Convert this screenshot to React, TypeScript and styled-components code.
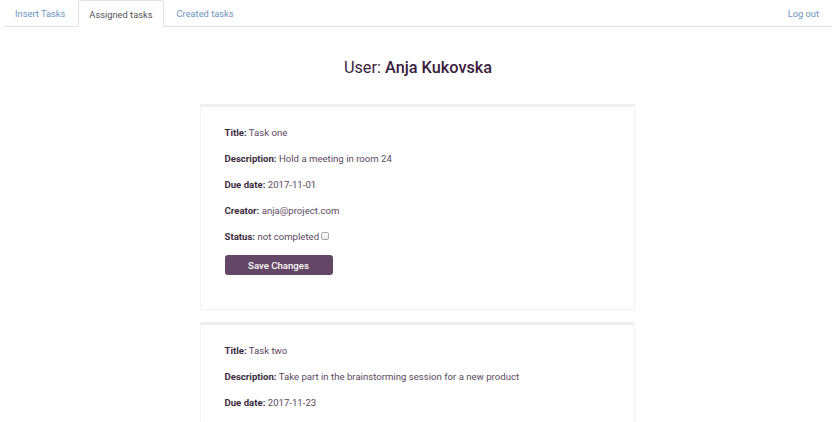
import React from "react";
import styled, { createGlobalStyle } from "styled-components";

const Global = createGlobalStyle`
  html, body { margin: 0; padding: 0; background: #fff; }
  body { font-family: Roboto, "Noto Sans", Arial, sans-serif; }
  * { box-sizing: border-box; }
`;

const Page = styled.div`
  width: 840px;
  padding: 0 8px 0 4px;
`;

const Nav = styled.nav`
  display: flex;
  align-items: flex-end;
  height: 27px;
  border-bottom: 1px solid #e3e3e3;
`;

const Tab = styled.a<{ $active?: boolean }>`
  display: flex;
  align-items: center;
  height: ${(p) => (p.$active ? "27px" : "26px")};
  padding: 0 10px;
  margin-right: 2px;
  font-size: 9.3px;
  text-decoration: none;
  color: ${(p) => (p.$active ? "#555" : "#6b93c2")};
  background: #fff;
  border: 1px solid ${(p) => (p.$active ? "#e3e3e3" : "transparent")};
  border-bottom: none;
  border-radius: 3px 3px 0 0;
  margin-bottom: ${(p) => (p.$active ? "-1px" : "0")};
  align-self: flex-start;
`;

const Spacer = styled.div`
  flex: 1;
`;

const Heading = styled.h1`
  margin: 31px 0 0;
  text-align: center;
  font-size: 16.3px;
  font-weight: 400;
  color: #3b2440;
  line-height: 20px;
`;

const Name = styled.span`
  font-weight: 500;
  color: #3a1c3f;
`;

const List = styled.div`
  display: flex;
  flex-direction: column;
  align-items: center;
  gap: 12px;
  margin-top: 26px;
  padding-right: 2px;
`;

const Card = styled.div`
  width: 435px;
  border: 1px solid #f3f3f3;
  border-top: 3px solid #efefef;
  padding: 18px 24px 34px;
`;

const Row = styled.p`
  margin: 0 0 10px;
  font-size: 9.6px;
  line-height: 16px;
  color: #5b4860;
`;

const Label = styled.b`
  font-weight: 700;
  color: #3c2c40;
`;

const Check = styled.input`
  appearance: none;
  display: inline-block;
  vertical-align: middle;
  width: 8px;
  height: 8px;
  margin: -3px 0 0 2px;
  border: 1px solid #a8a8a8;
  border-radius: 2px;
  background: linear-gradient(#fff, #e9e9e9);
`;

const Button = styled.button`
  display: block;
  margin-top: 0;
  width: 108px;
  height: 20px;
  border: none;
  border-radius: 3px;
  background: #644666;
  color: #fff;
  font-family: Roboto, "Noto Sans", Arial, sans-serif;
  font-size: 9.6px;
  font-weight: 500;
`;

type Task = {
  title: string;
  description: string;
  due: string;
  creator: string;
};

const tasks: Task[] = [
  { title: "Task one", description: "Hold a meeting in room 24", due: "2017-11-01", creator: "anja@project.com" },
  { title: "Task two", description: "Take part in the brainstorming session for a new product", due: "2017-11-23", creator: "anja@project.com" },
];

export default function App() {
  return (
    <Page>
      <Global />
      <Nav>
        <Tab href="#">Insert Tasks</Tab>
        <Tab href="#" $active>Assigned tasks</Tab>
        <Tab href="#">Created tasks</Tab>
        <Spacer />
        <Tab href="#">Log out</Tab>
      </Nav>
      <Heading>
        User: <Name>Anja Kukovska</Name>
      </Heading>
      <List>
        {tasks.map((t) => (
          <Card key={t.title}>
            <Row><Label>Title:</Label> {t.title}</Row>
            <Row><Label>Description:</Label> {t.description}</Row>
            <Row><Label>Due date:</Label> {t.due}</Row>
            <Row><Label>Creator:</Label> {t.creator}</Row>
            <Row><Label>Status:</Label> not completed<Check type="checkbox" /></Row>
            <Button>Save Changes</Button>
          </Card>
        ))}
      </List>
    </Page>
  );
}
